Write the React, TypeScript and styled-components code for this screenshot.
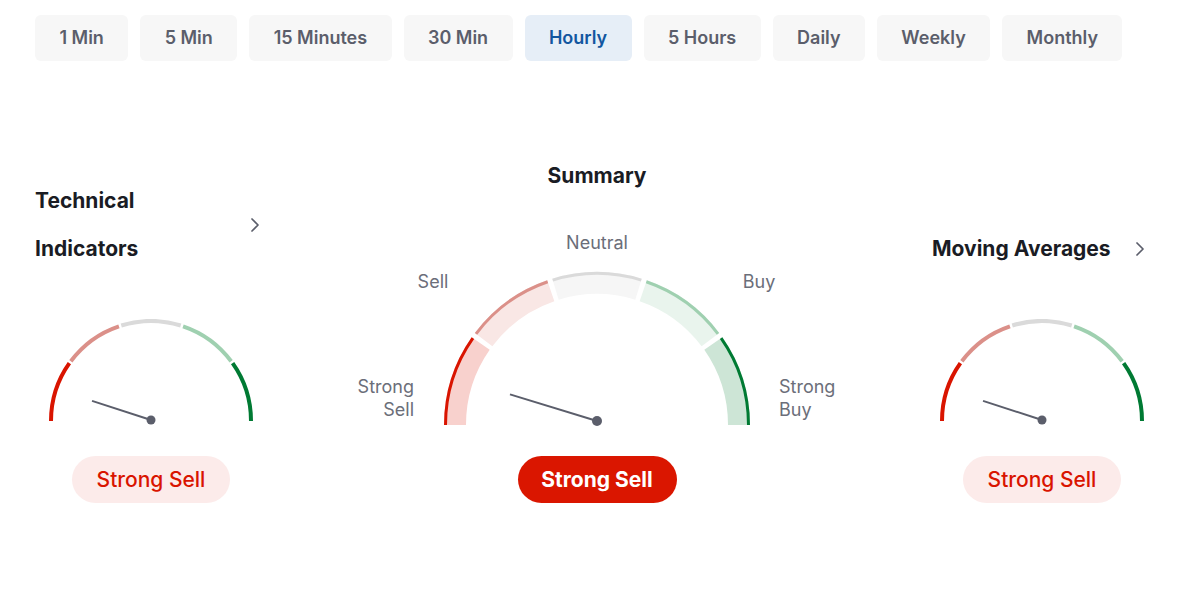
import { FC } from "react";
import styled, { createGlobalStyle } from "styled-components";
import { ChevronRight } from "lucide-react";

const GlobalStyle = createGlobalStyle`
  * { box-sizing: border-box; }
  body {
    margin: 0;
    background: #ffffff;
    font-family: Inter, "Noto Sans", sans-serif;
    color: #1a1c24;
  }
`;

const Page = styled.div`
  padding: 15px 0 0 35px;
  width: 1200px;
`;

const Periods = styled.div`
  display: flex;
  gap: 12px;
`;

const PeriodButton = styled.button<{ $active?: boolean }>`
  height: 46px;
  padding: 0 24.4px;
  border: none;
  border-radius: 6px;
  font-family: Inter, sans-serif;
  font-size: 18px;
  font-weight: 600;
  line-height: 44px;
  cursor: pointer;
  background: ${({ $active }) => ($active ? "#e6eef7" : "#f7f7f7")};
  color: ${({ $active }) => ($active ? "#1256a0" : "#5b5e6b")};
`;

const Panels = styled.div`
  display: flex;
  align-items: flex-end;
  margin-top: 103px;
`;

const Panel = styled.div<{ $width: number; $ml?: number }>`
  width: ${({ $width }) => $width}px;
  margin-left: ${({ $ml }) => $ml ?? 0}px;
  display: flex;
  flex-direction: column;
  align-items: center;
`;

const PanelHeader = styled.div`
  width: 100%;
  display: flex;
  align-items: center;
  justify-content: space-between;
  margin-bottom: 46px;
  color: #5b5e6b;
`;

const PanelTitle = styled.div<{ $narrow?: boolean }>`
  font-size: 21px;
  font-weight: 700;
  line-height: 48px;
  color: #1a1c24;
  max-width: ${({ $narrow }) => ($narrow ? "150px" : "none")};
`;

const SummaryTitle = styled.div`
  font-size: 21px;
  font-weight: 700;
  line-height: 24px;
  color: #1a1c24;
  margin-bottom: 40px;
`;

const GaugeSvg = styled.svg`
  display: block;
  text {
    font-family: Inter, sans-serif;
    font-size: 18px;
    fill: #6b6e79;
  }
`;

const Verdict = styled.div<{ $strong?: boolean; $mt: number }>`
  margin-top: ${({ $mt }) => $mt}px;
  width: ${({ $strong }) => ($strong ? 159 : 158)}px;
  height: 47px;
  border-radius: 24px;
  display: flex;
  align-items: center;
  justify-content: center;
  font-size: 21px;
  font-weight: ${({ $strong }) => ($strong ? 700 : 500)};
  background: ${({ $strong }) => ($strong ? "#da1600" : "#fcebea")};
  color: ${({ $strong }) => ($strong ? "#ffffff" : "#d91400")};
`;

const periods = [
  "1 Min",
  "5 Min",
  "15 Minutes",
  "30 Min",
  "Hourly",
  "5 Hours",
  "Daily",
  "Weekly",
  "Monthly",
];

const strongColors = ["#d91400", "#db9089", "#dadada", "#9fd0b0", "#007a33"];
const bandColors = ["#f8d1cd", "#f9e7e5", "#f6f6f6", "#e9f4ed", "#cde5d6"];

const pt = (cx: number, cy: number, r: number, deg: number) => {
  const a = (deg * Math.PI) / 180;
  return [cx + r * Math.cos(a), cy - r * Math.sin(a)];
};

const arc = (cx: number, cy: number, r: number, from: number, to: number) => {
  const [x1, y1] = pt(cx, cy, r, from);
  const [x2, y2] = pt(cx, cy, r, to);
  return `M ${x1} ${y1} A ${r} ${r} 0 0 1 ${x2} ${y2}`;
};

interface IGaugeProps {
  value: number; // needle angle, degrees from left
}

// arc ends sit on y=102, the extra height leaves room for the needle hub
const SmallGauge: FC<IGaugeProps> = ({ value }) => {
  const cx = 104;
  const cy = 102;
  const [nx, ny] = pt(cx, cy - 1, 62, 180 - value);
  return (
    <GaugeSvg width={208} height={107} viewBox="0 0 208 107">
      {strongColors.map((c, i) => {
        const from = 180 - 36 * i - (i === 0 ? 0 : 0.7);
        const to = 180 - 36 * (i + 1) + (i === 4 ? 0 : 0.7);
        return (
          <path key={c} d={arc(cx, cy, 100, from, to)} stroke={c} strokeWidth={4} fill="none" />
        );
      })}
      <line x1={cx} y1={cy - 1} x2={nx} y2={ny} stroke="#5b5e6b" strokeWidth={2} />
      <circle cx={cx} cy={cy - 1} r={4.5} fill="#5b5e6b" />
    </GaugeSvg>
  );
};

const SummaryGauge: FC<IGaugeProps> = ({ value }) => {
  const cx = 250;
  const cy = 197;
  const [nx, ny] = pt(cx, cy - 4, 91, 180 - value);
  return (
    <GaugeSvg width={500} height={200} viewBox="0 0 500 200">
      {strongColors.map((c, i) => {
        const from = 180 - 36 * i - (i === 0 ? 0 : 1);
        const to = 180 - 36 * (i + 1) + (i === 4 ? 0 : 1);
        return (
          <g key={c}>
            <path d={arc(cx, cy, 142, from, to)} stroke={bandColors[i]} strokeWidth={22} fill="none" />
            <path d={arc(cx, cy, 151.5, from, to)} stroke={c} strokeWidth={3} fill="none" />
          </g>
        );
      })}
      <line x1={cx} y1={cy - 4} x2={nx} y2={ny} stroke="#5b5e6b" strokeWidth={2} />
      <circle cx={cx} cy={cy - 4} r={5} fill="#5b5e6b" />

      <text x={250} y={21} textAnchor="middle">Neutral</text>
      <text x={86} y={60} textAnchor="middle">Sell</text>
      <text x={412} y={60} textAnchor="middle">Buy</text>
      <text x={67} y={165} textAnchor="end">Strong</text>
      <text x={67} y={188} textAnchor="end">Sell</text>
      <text x={432} y={165}>Strong</text>
      <text x={432} y={188}>Buy</text>
    </GaugeSvg>
  );
};

export default function App() {
  return (
    <Page>
      <GlobalStyle />
      <Periods>
        {periods.map((p) => (
          <PeriodButton key={p} $active={p === "Hourly"}>
            {p}
          </PeriodButton>
        ))}
      </Periods>

      <Panels>
        <Panel $width={232}>
          <PanelHeader>
            <PanelTitle $narrow>Technical Indicators</PanelTitle>
            <ChevronRight size={24} strokeWidth={1.75} />
          </PanelHeader>
          <SmallGauge value={18} />
          <Verdict $mt={30}>Strong Sell</Verdict>
        </Panel>

        <Panel $width={500} $ml={80}>
          <SummaryTitle>Summary</SummaryTitle>
          <SummaryGauge value={17} />
          <Verdict $strong $mt={28}>Strong Sell</Verdict>
        </Panel>

        <Panel $width={220} $ml={85}>
          <PanelHeader>
            <PanelTitle>Moving Averages</PanelTitle>
            <ChevronRight size={24} strokeWidth={1.75} />
          </PanelHeader>
          <SmallGauge value={18} />
          <Verdict $mt={30}>Strong Sell</Verdict>
        </Panel>
      </Panels>
    </Page>
  );
}
